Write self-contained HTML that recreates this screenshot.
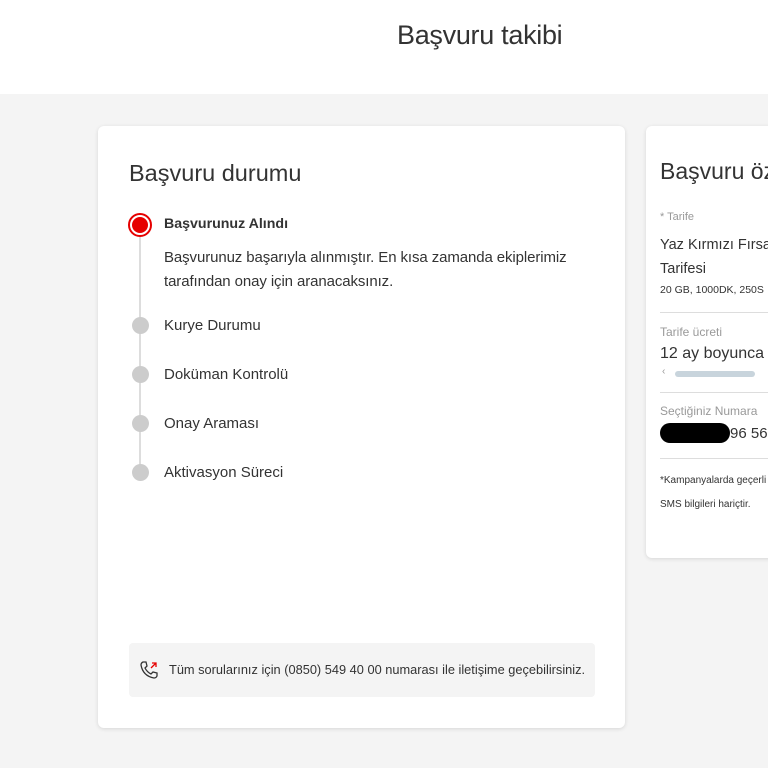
<!DOCTYPE html>
<html><head><meta charset="utf-8"><style>
*{margin:0;padding:0;box-sizing:border-box}
body{width:768px;height:768px;overflow:hidden;background:#f4f4f4;font-family:"Liberation Sans","DejaVu Sans",sans-serif;color:#333;position:relative}
.top{position:absolute;left:0;top:0;width:768px;height:94px;background:#fff}
.top h1{position:absolute;left:397px;top:20px;font-weight:normal;font-size:27px;color:#333;letter-spacing:-0.3px}
.card{position:absolute;background:#fff;border-radius:6px;box-shadow:0 1px 4px rgba(0,0,0,.12)}
.a{left:98px;top:126px;width:527px;height:602px}
.b{left:646px;top:126px;width:140px;height:432px}
.t{position:absolute;white-space:nowrap}
.dot{position:absolute;border-radius:50%;background:#ccc;width:17px;height:17px}
.hr{position:absolute;left:14px;width:130px;height:1px;background:#ddd}
</style></head><body>
<div class="top"><h1>Başvuru takibi</h1></div>
<div class="card a">
 <div class="t" style="left:31px;top:34px;font-size:23.5px;color:#333">Başvuru durumu</div>
 <div style="position:absolute;left:41px;top:110px;width:2px;height:240px;background:#ddd"></div>
 <div style="position:absolute;left:30px;top:87px;width:24px;height:24px;border-radius:50%;border:2px solid #e60000;background:#fff"></div>
 <div style="position:absolute;left:34px;top:91px;width:16px;height:16px;border-radius:50%;background:#e60000"></div>
 <div class="t" style="left:66px;top:90px;font-size:14.2px;font-weight:bold;color:#333">Başvurunuz Alındı</div>
 <div class="t" style="left:66px;top:120px;font-size:15px;line-height:24px;color:#333;letter-spacing:-0.1px">Başvurunuz başarıyla alınmıştır. En kısa zamanda ekiplerimiz<br>tarafından onay için aranacaksınız.</div>
 <div class="dot" style="left:34px;top:191px"></div>
 <div class="t" style="left:66px;top:191px;font-size:15px">Kurye Durumu</div>
 <div class="dot" style="left:34px;top:240px"></div>
 <div class="t" style="left:66px;top:240px;font-size:15px">Doküman Kontrolü</div>
 <div class="dot" style="left:34px;top:289px"></div>
 <div class="t" style="left:66px;top:289px;font-size:15px">Onay Araması</div>
 <div class="dot" style="left:34px;top:338px"></div>
 <div class="t" style="left:66px;top:338px;font-size:15px">Aktivasyon Süreci</div>
 <div style="position:absolute;left:31px;top:517px;width:466px;height:54px;background:#f4f4f4;border-radius:4px">
  <svg style="position:absolute;left:10px;top:17px" width="20" height="20" viewBox="0 0 20 20" fill="none" stroke="#333" stroke-width="1.3"><path d="M4 2 L7 2 L8 6 L6 8 Q8 12 12 14 L14 12 L18 13 L18 16 Q17 18 15 18 Q4 16 2 5 Q2 3 4 2Z"/><path d="M12 8 L17 3 M13 3 L17 3 L17 7" stroke="#e60000"/></svg>
  <div class="t" style="left:40px;top:19px;font-size:12.8px;color:#333">Tüm sorularınız için (0850) 549 40 00 numarası ile iletişime geçebilirsiniz.</div>
 </div>
</div>
<div class="card b">
 <div class="t" style="left:14px;top:32px;font-size:23px">Başvuru öz</div>
 <div class="t" style="left:14px;top:85px;font-size:11px;color:#999">* Tarife</div>
 <div class="t" style="left:14px;top:107px;font-size:14.5px;line-height:24px">Yaz Kırmızı Fırsa<br>Tarifesi</div>
 <div class="t" style="left:14px;top:158px;font-size:10.5px">20 GB, 1000DK, 250S</div>
 <div class="hr" style="top:186px"></div>
 <div class="t" style="left:14px;top:199px;font-size:12px;color:#999">Tarife ücreti</div>
 <div class="t" style="left:14px;top:219px;font-size:16px">12 ay boyunca</div>
 <div class="t" style="left:16px;top:240px;font-size:10px;color:#999">‹</div>
 <div style="position:absolute;left:29px;top:245px;width:80px;height:6px;border-radius:3px;background:#c8d4dc"></div>
 <div class="hr" style="top:266px"></div>
 <div class="t" style="left:14px;top:278px;font-size:12px;color:#999">Seçtiğiniz Numara</div>
 <div style="position:absolute;left:14px;top:297px;width:70px;height:20px;border-radius:10px;background:#000"></div>
 <div class="t" style="left:84px;top:299px;font-size:15px">96 56</div>
 <div class="hr" style="top:332px"></div>
 <div class="t" style="left:14px;top:349px;font-size:10px">*Kampanyalarda geçerli</div>
 <div class="t" style="left:14px;top:373px;font-size:10px">SMS bilgileri hariçtir.</div>
</div>
</body></html>
